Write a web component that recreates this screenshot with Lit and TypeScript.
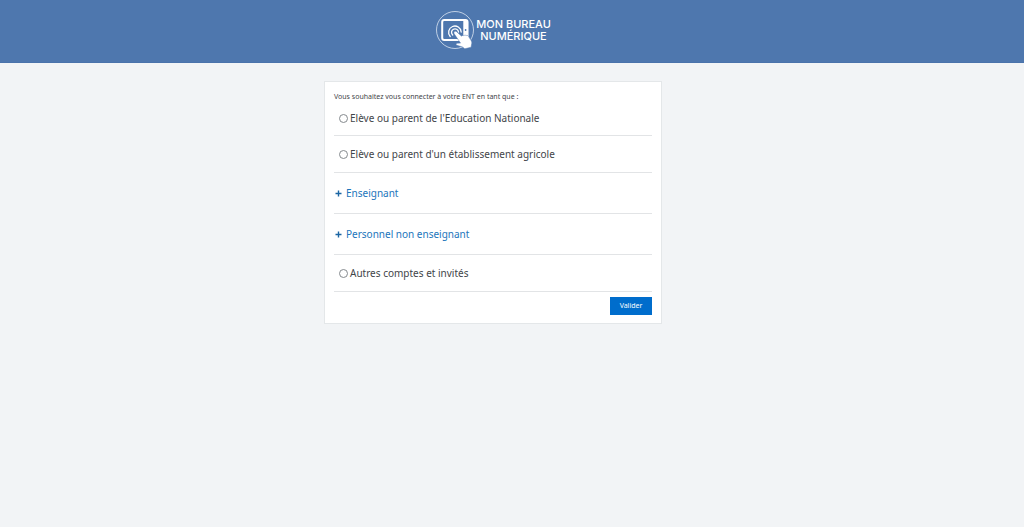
import { LitElement, html, css, svg } from "lit";
import { customElement, state } from "lit/decorators.js";

type Profile = { id: string; label: string; group?: boolean };

const PROFILES: Profile[] = [
  { id: "national", label: "Elève ou parent de l'Education Nationale" },
  { id: "agricole", label: "Elève ou parent d'un établissement agricole" },
  { id: "enseignant", label: "Enseignant", group: true },
  { id: "personnel", label: "Personnel non enseignant", group: true },
  { id: "autres", label: "Autres comptes et invités" },
];

const emblem = svg`
  <circle cx="20" cy="20" r="18.5" fill="none" stroke="#dce6f3" stroke-width="0.8"/>
  <rect x="7.2" y="10" width="25.3" height="20" rx="2" fill="none" stroke="#fff" stroke-width="2"/>
  <path d="M28.300 10v20h3.200a1.600 1.600 0 0 0 1.600-1.600V11.600a1.600 1.600 0 0 0-1.600-1.600z" fill="#fff"/>
  <circle cx="30.600" cy="20" r="0.900" fill="#4e77ae"/>
  <path d="M15.200 26.500a6.300 6.300 0 1 1 11-4.500M17.700 25a3.500 3.500 0 1 1 5.800-3" fill="none" stroke="#fff" stroke-width="1.300" stroke-linecap="round"/>
  <path d="M19.300 21.700c.8-.8 1.900-.5 2.600.2l4.700 4.300c.4-.9 1.500-1.100 2.200-.4.500-.8 1.600-.9 2.300-.1.700-.6 1.700-.4 2.200.4l2.800 4.500c.8 1.400.9 2.400.4 4l-.4 2.600-6.300 1.600-2.400-1.900-5.600-1.600c-1.200-.5-.9-2 .4-2.100l3.300-.1-6-8.800c-.6-.9-.8-1.900-.2-2.600z" fill="#fff" stroke="#4e77ae" stroke-width="0.500"/>
`;

@customElement("app-root")
export class AppRoot extends LitElement {
  @state() private selected = "";

  static styles = css`
    :host {
      display: block;
      min-height: 100vh;
      background: #f2f4f6;
      color: #3f4549;
      font-family: "Noto Sans", "Open Sans", sans-serif;
    }
    *,
    *::before {
      box-sizing: border-box;
    }
    .banner {
      display: flex;
      justify-content: center;
      align-items: center;
      height: 63px;
      padding: 0 38px 2px 0;
      background: #4e77ae;
      border-bottom: 1px solid #4a73ab;
    }
    .brand {
      display: flex;
      align-items: center;
      gap: 1px;
      color: #fff;
      text-decoration: none;
    }
    .emblem {
      width: 40px;
      height: 40px;
      flex: none;
    }
    .name {
      font: 500 11px/12px Inter, "Open Sans", sans-serif;
      text-align: center;
    }
    .line {
      display: block;
    }
    .content {
      padding: 18px 38px 18px 0;
    }
    .card {
      width: 100%;
      max-width: 338px;
      margin: 0 auto;
      padding: 11px 9px 8px;
      background: #fff;
      border: 1px solid #e4e7e9;
    }
    .choices {
      margin: 0;
      padding: 0;
      border: 0;
      min-width: 0;
    }
    .intro {
      padding: 0;
      font-size: 7px;
      line-height: 8px;
    }
    .row {
      display: flex;
      align-items: center;
      height: 37px;
      border-bottom: 1px solid #e2e4e6;
      font-size: 10px;
      line-height: 16px;
    }
    .intro + .row {
      height: 35px;
    }
    .row.group {
      height: 41px;
    }
    .choice {
      display: flex;
      align-items: center;
      gap: 2px;
      padding-left: 5px;
    }
    .radio {
      appearance: none;
      width: 9px;
      height: 9px;
      margin: 0;
      border: 1px solid #858a8e;
      border-radius: 50%;
      background: #fff;
    }
    .radio:checked {
      background: radial-gradient(#006dcc 40%, #fff 45%);
    }
    .toggle {
      display: flex;
      align-items: center;
      gap: 4px;
      padding: 0 0 0 1px;
      border: 0;
      background: none;
      color: #1b75bb;
      font: inherit;
      cursor: pointer;
    }
    .plus {
      width: 7px;
      height: 7px;
    }
    .actions {
      display: flex;
      justify-content: flex-end;
      padding-top: 5px;
    }
    .submit {
      width: 42px;
      height: 18px;
      padding: 0;
      border: 0;
      background: #006dcc;
      color: #fff;
      font-family: inherit;
      font-size: 7px;
      line-height: 18px;
      cursor: pointer;
    }
  `;

  private renderRow(p: Profile) {
    if (p.group) {
      return html`<div class="row group">
        <button class="toggle" type="button">
          <svg class="plus" viewBox="0 0 7 7" aria-hidden="true">
            <path d="M3.500 .5v6M.5 3.500h6" stroke="#1b65a3" stroke-width="1.400" />
          </svg>
          <span>${p.label}</span>
        </button>
      </div>`;
    }
    return html`<div class="row">
      <label class="choice">
        <input
          class="radio"
          type="radio"
          name="profile"
          .value=${p.id}
          .checked=${this.selected === p.id}
          @change=${() => (this.selected = p.id)}
        />
        <span>${p.label}</span>
      </label>
    </div>`;
  }

  render() {
    return html`
      <header class="banner">
        <a class="brand" href="#">
          <svg class="emblem" viewBox="0 0 40 40" aria-hidden="true">${emblem}</svg>
          <span class="name">
            <span class="line">MON BUREAU</span>
            <span class="line">NUMÉRIQUE</span>
          </span>
        </a>
      </header>
      <main class="content">
        <form class="card" @submit=${(e: Event) => e.preventDefault()}>
          <fieldset class="choices">
            <legend class="intro">Vous souhaitez vous connecter à votre ENT en tant que :</legend>
            ${PROFILES.map((p) => this.renderRow(p))}
          </fieldset>
          <div class="actions">
            <button class="submit" type="submit">Valider</button>
          </div>
        </form>
      </main>
    `;
  }
}
